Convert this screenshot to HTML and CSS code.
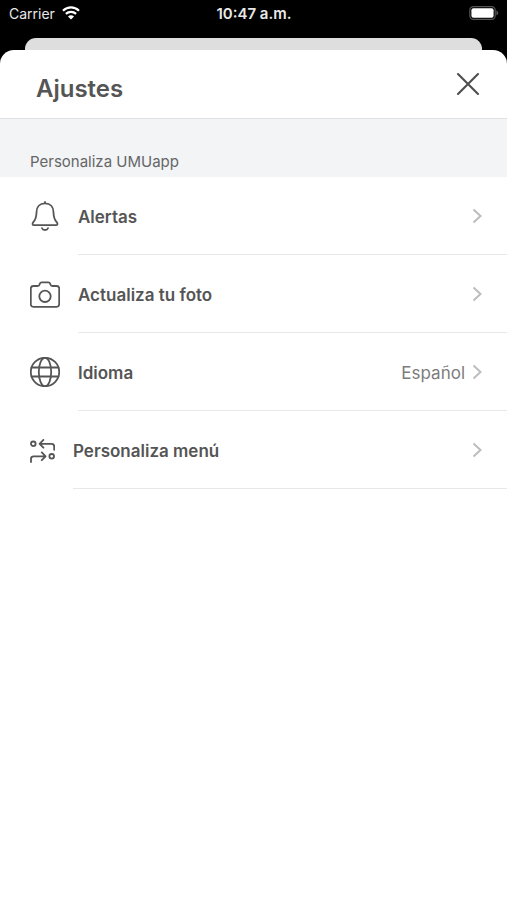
FILE: index.html
```html
<!DOCTYPE html>
<html lang="es">
<head>
<meta charset="utf-8">
<meta name="viewport" content="width=device-width, initial-scale=1">
<title>Ajustes</title>
<link rel="stylesheet" href="styles.css">
</head>
<body>
<div class="status">
  <div class="carrier">
    <span>Carrier</span>
    <svg width="18" height="14" viewBox="0 0 18 14" aria-hidden="true" fill="none" stroke="#fff" stroke-width="2.2">
      <path d="M1 4.7C5.6.2 12.4.2 17 4.7M3.9 7.9C6.8 5.1 11.2 5.1 14.1 7.9"/>
      <path d="M9 13.5 6 10.4C7.7 8.8 10.3 8.8 12 10.4Z" fill="#fff" stroke="none"/>
    </svg>
  </div>
  <time class="clock">10:47 a.m.</time>
  <svg class="battery" width="30" height="14" viewBox="0 0 30 14" aria-hidden="true">
    <rect x=".8" y=".6" width="25.4" height="12.8" rx="3.6" fill="none" stroke="#555" stroke-width="1.2"/>
    <rect x="2.4" y="2.2" width="22.2" height="9.6" rx="2" fill="#fff"/>
    <path d="M27.4 4.6Q29.4 5.6 29.4 7T27.4 9.4Z" fill="#555"/>
  </svg>
</div>
<div class="back-card"></div>
<main class="sheet">
  <header class="header">
    <h1>Ajustes</h1>
    <button class="close" aria-label="Cerrar">
      <svg width="24" height="24" viewBox="0 0 24 24" fill="none" stroke="#4d4d4d" stroke-width="2.1" stroke-linecap="round"><path d="M2 2 22 22M22 2 2 22"/></svg>
    </button>
  </header>
  <h2 class="section">Personaliza UMUapp</h2>
  <ul class="list">
    <li><button class="row">
      <svg class="icon" width="30" height="30" viewBox="0 0 30 30" aria-hidden="true"><path d="M15 .9V2.4M15 2.4C9.600 2.400 6.500 6.200 6.500 11.300C6.500 16.500 5.600 18.600 3.300 21.200C2 22.700 2.400 24.200 4 24.200H26C27.600 24.200 28 22.700 26.700 21.200C24.400 18.600 23.500 16.500 23.500 11.300C23.500 6.200 20.400 2.400 15 2.400ZM12 27.200C12.800 29.600 17.200 29.600 18 27.200"/></svg>
      <span class="body"><span class="label">Alertas</span><svg class="chevron" width="10" height="16" viewBox="0 0 10 16" aria-hidden="true"><path d="M1.500 1.500 8.500 8 1.500 14.500"/></svg></span>
    </button></li>
    <li><button class="row">
      <svg class="icon" width="30" height="30" viewBox="0 0 30 30" aria-hidden="true"><path d="M3.400 7H7.600Q9.300 7 9.600 5.400L9.900 4.500Q10.300 3.300 11.600 3.300H18.400Q19.700 3.300 20.100 4.500L20.400 5.400Q20.700 7 22.400 7H26.600Q29.200 7 29.200 9.600V25.200Q29.200 27.800 26.600 27.800H3.400Q.8 27.800 .8 25.200V9.600Q.8 7 3.400 7Z"/><circle cx="15" cy="17.300" r="5.700"/></svg>
      <span class="body"><span class="label">Actualiza tu foto</span><svg class="chevron" width="10" height="16" viewBox="0 0 10 16" aria-hidden="true"><path d="M1.500 1.500 8.500 8 1.500 14.500"/></svg></span>
    </button></li>
    <li><button class="row">
      <svg class="icon" width="30" height="30" viewBox="0 0 30 30" aria-hidden="true"><circle cx="15" cy="15" r="14.200"/><ellipse cx="15" cy="15" rx="6.200" ry="14.200"/><path d="M1.500 10.500H28.500M1.500 19.500H28.500"/></svg>
      <span class="body"><span class="label">Idioma</span><span class="value">Español</span><svg class="chevron" width="10" height="16" viewBox="0 0 10 16" aria-hidden="true"><path d="M1.500 1.500 8.500 8 1.500 14.500"/></svg></span>
    </button></li>
    <li><button class="row">
      <svg class="icon" width="25" height="30" viewBox="0 0 25 30" aria-hidden="true"><circle cx="3.300" cy="8.800" r="2.300"/><path d="M13.400 4.900 9.600 8.800 13.400 12.700M9.800 8.800H21.600Q24.200 8.800 24.200 11.400V14.800M11.800 17.400 15.600 21.300 11.800 25.200M15.400 21.300H3.600Q1 21.300 1 23.900V27"/><circle cx="21.700" cy="21.300" r="2.300"/></svg>
      <span class="body"><span class="label">Personaliza menú</span><svg class="chevron" width="10" height="16" viewBox="0 0 10 16" aria-hidden="true"><path d="M1.500 1.500 8.500 8 1.500 14.500"/></svg></span>
    </button></li>
  </ul>
</main>
</body>
</html>
```
FILE: styles.css
```css
* { box-sizing: border-box; }

body {
  margin: 0;
  min-height: 100vh;
  display: flex;
  flex-direction: column;
  background: #000;
  color: #555;
  font-family: Inter, "Liberation Sans", sans-serif;
}

button {
  border: 0;
  padding: 0;
  background: none;
  color: inherit;
  font: inherit;
  text-align: left;
}

svg { display: block; flex: none; }

.status {
  display: grid;
  grid-template-columns: 1fr auto 1fr;
  align-items: center;
  height: 26px;
  margin-bottom: 12px;
  padding: 0 8px 0 9px;
  color: #e8e8e8;
  font-size: 14px;
}

.carrier { display: flex; align-items: center; gap: 7px; }
.clock { font-size: 15px; font-weight: 600; }
.battery { justify-self: end; }

.back-card {
  height: 12px;
  margin: 0 25px;
  border-radius: 11px 11px 0 0;
  background: #dedede;
}

.sheet {
  flex: 1;
  border-radius: 14px 14px 0 0;
  background: #fff;
}

.header {
  display: flex;
  align-items: center;
  justify-content: space-between;
  height: 69px;
  padding: 0 27px 0 36px;
  border-bottom: 1px solid #dfe1e2;
}

h1 {
  margin: 10px 0 0;
  font-size: 24px;
  font-weight: 600;
  line-height: 32px;
}

.section {
  margin: 0;
  padding: 33px 30px 5px;
  background: #f2f4f6;
  color: #666;
  font-size: 15px;
  font-weight: 400;
  line-height: 20px;
}

.list { margin: 0; padding: 0; list-style: none; }

.row {
  display: flex;
  align-items: center;
  gap: 18px;
  width: 100%;
  padding-left: 30px;
}

.icon {
  fill: none;
  stroke: #555;
  stroke-width: 1.8;
  stroke-linecap: round;
  stroke-linejoin: round;
}

.body {
  flex: 1;
  display: flex;
  align-items: center;
  gap: 7px;
  height: 78px;
  padding-right: 25px;
  border-bottom: 1px solid #e8e8e8;
  font-size: 17px;
}

.label,
.value { padding-top: 2px; }
.label { flex: 1; font-weight: 600; }
.value { color: #7c7c7c; }

.chevron {
  fill: none;
  stroke: #bdbdbd;
  stroke-width: 2;
}
```
